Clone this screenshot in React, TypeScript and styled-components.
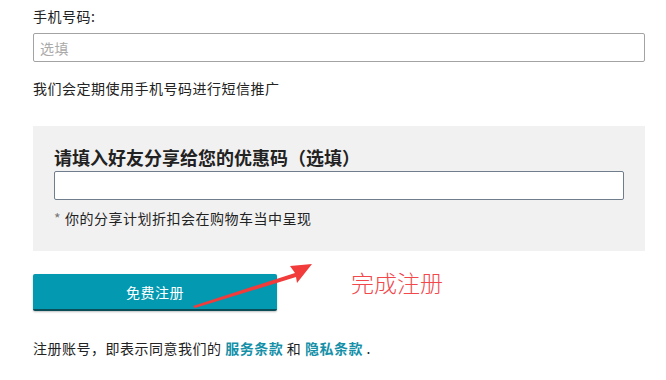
import styled, { createGlobalStyle } from "styled-components";

const GlobalStyle = createGlobalStyle`
  html, body {
    margin: 0;
    padding: 0;
    background: #ffffff;
  }
  body {
    font-family: "Noto Sans CJK SC", "Noto Sans", sans-serif;
    color: #222;
  }
`;

const Page = styled.div`
  position: relative;
  width: 612px;
  padding: 6px 0 0 33px;
  letter-spacing: 0.5px;
`;

const Label = styled.label`
  display: block;
  font-size: 14px;
  line-height: 20px;
  color: #222;
`;

const TextInput = styled.input<{ $inset?: boolean }>`
  display: block;
  box-sizing: border-box;
  width: 100%;
  height: 29px;
  margin-top: ${(p) => (p.$inset ? "1px" : "7px")};
  padding: 0 6px;
  border: 1px solid ${(p) => (p.$inset ? "#6f7d8c" : "#a3a3a3")};
  border-radius: 2px;
  background: #fff;
  font-family: inherit;
  font-size: 14px;
  letter-spacing: 0.5px;
  outline: none;

  &::placeholder {
    color: #aaa;
  }
`;

const Hint = styled.p`
  margin: 16px 0 0;
  font-size: 14px;
  line-height: 20px;
`;

const PromoBox = styled.section`
  margin-top: 28px;
  padding: 18px 21px 23px;
  background: #f1f1f1;
`;

const PromoTitle = styled.h3`
  margin: 0;
  font-size: 18px;
  line-height: 26px;
  font-weight: 700;
  letter-spacing: 0;
  color: #222;
`;

const Note = styled.p`
  margin: 8px 0 0;
  font-size: 14px;
  line-height: 20px;

  span {
    color: #777;
    margin-right: 4px;
  }
`;

const SubmitRow = styled.div`
  position: relative;
  margin-top: 23px;
`;

const SubmitButton = styled.button`
  display: block;
  width: 244px;
  height: 37px;
  border: none;
  border-bottom: 2px solid #0a4e5a;
  border-radius: 2px;
  background: #0399b0;
  color: #fff;
  font-family: inherit;
  font-size: 14px;
  letter-spacing: 0.5px;
  box-shadow: 0 1px 2px rgba(0, 0, 0, 0.25);
  cursor: pointer;
`;

const Annotation = styled.div`
  position: absolute;
  left: 159px;
  top: -12px;
  display: flex;
  align-items: flex-start;
  pointer-events: none;
`;

const AnnotationText = styled.span`
  margin: 5px 0 0 37px;
  font-size: 23px;
  line-height: 30px;
  font-weight: 300;
  letter-spacing: 0;
  color: #f2474b;
`;

const Terms = styled.p`
  margin: 27px 0 0;
  font-size: 14px;
  line-height: 20px;

  a {
    color: #1590a8;
    font-weight: 700;
    text-decoration: none;
  }
`;

const Arrow = () => (
  <svg width="122" height="46" viewBox="0 0 122 46">
    <polygon
      points="1,44 103,11 98,4 120,2 105,21 104,15 3,46"
      fill="#f23b3b"
    />
  </svg>
);

export default function App() {
  return (
    <>
      <GlobalStyle />
      <Page>
        <Label>手机号码:</Label>
        <TextInput placeholder="选填" />
        <Hint>我们会定期使用手机号码进行短信推广</Hint>

        <PromoBox>
          <PromoTitle>请填入好友分享给您的优惠码（选填）</PromoTitle>
          <TextInput $inset />
          <Note>
            <span>*</span>你的分享计划折扣会在购物车当中呈现
          </Note>
        </PromoBox>

        <SubmitRow>
          <SubmitButton>免费注册</SubmitButton>
          <Annotation>
            <Arrow />
            <AnnotationText>完成注册</AnnotationText>
          </Annotation>
        </SubmitRow>

        <Terms>
          注册账号，即表示同意我们的 <a href="#">服务条款</a> 和{" "}
          <a href="#">隐私条款</a> .
        </Terms>
      </Page>
    </>
  );
}
